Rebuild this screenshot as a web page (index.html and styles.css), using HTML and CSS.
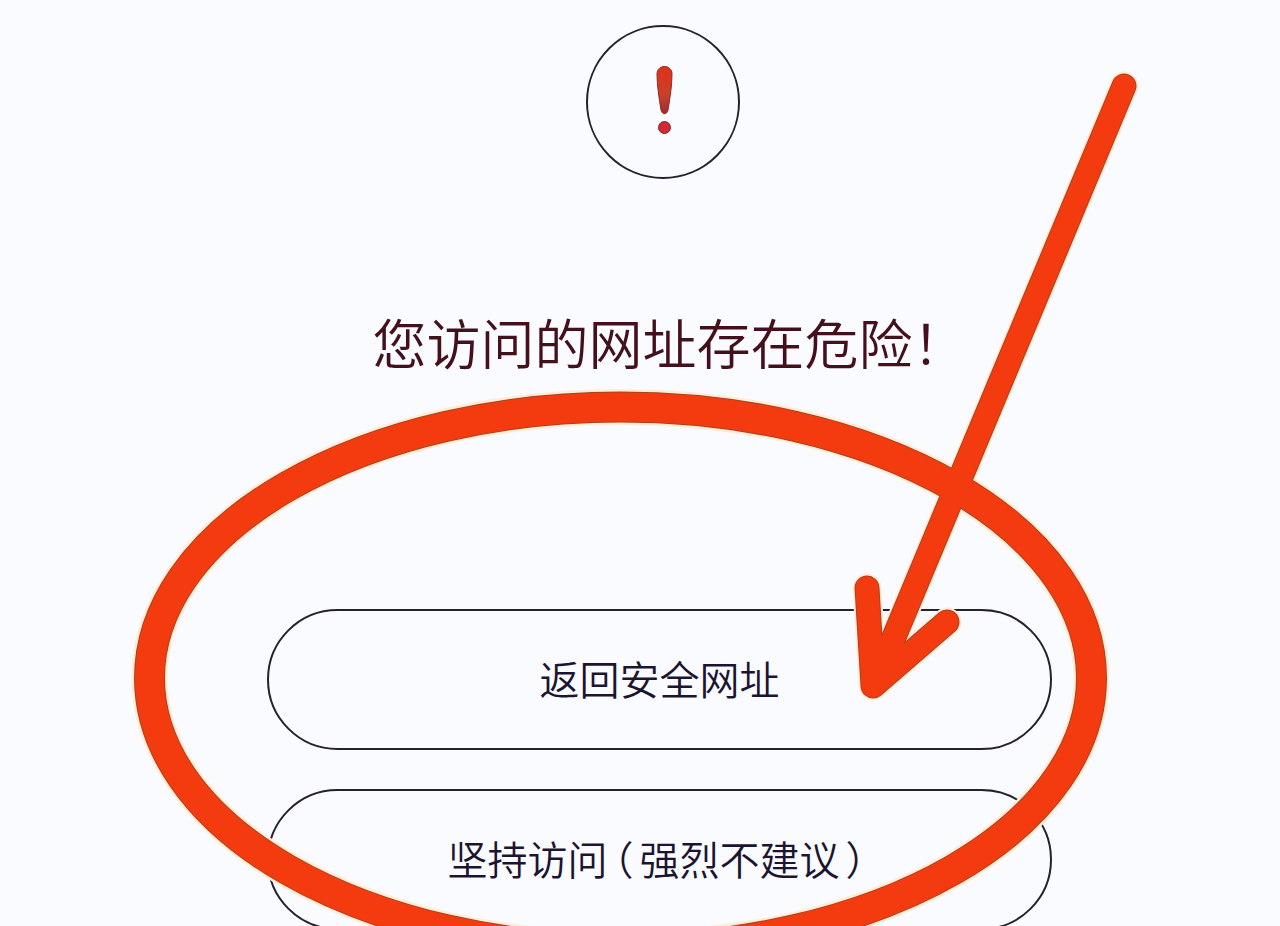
FILE: index.html
```html
<!DOCTYPE html>
<html lang="zh-CN">
<head>
<meta charset="utf-8">
<meta name="viewport" content="width=device-width, initial-scale=1">
<title>您访问的网址存在危险！</title>
<link rel="stylesheet" href="styles.css">
</head>
<body>
<div class="page">
  <main class="warning">
    <svg class="warning-icon" viewBox="0 0 156 156" aria-hidden="true">
      <defs>
        <linearGradient id="mark" x1="0" y1="0" x2="0" y2="1">
          <stop offset="0" stop-color="#e0301c"/>
          <stop offset="0.6" stop-color="#c9412a"/>
          <stop offset="1" stop-color="#9c2c38"/>
        </linearGradient>
      </defs>
      <circle cx="78" cy="78" r="76" fill="none" stroke="#25222f" stroke-width="2"/>
      <path d="M72 50C72 40 87 40 87 50C87 61 85 74 83 86C82 91 77 91 76 86C74 74 72 61 72 50Z" fill="url(#mark)" stroke="#8c2b20" stroke-width="1"/>
      <circle cx="79.500" cy="103.500" r="6" fill="#cf2a35" stroke="#8c2028" stroke-width="1"/>
    </svg>
    <h1 class="title">您访问的网址存在危险！</h1>
    <div class="actions">
      <button class="action" type="button">返回安全网址</button>
      <button class="action" type="button">坚持访问<span class="paren">（</span>强烈不建议<span class="paren">）</span></button>
    </div>
  </main>
  <svg class="annotation" viewBox="0 0 1280 926" preserveAspectRatio="xMidYMin meet" aria-hidden="true">
    <g class="halo">
      <ellipse cx="620.500" cy="678" rx="471" ry="271"/>
      <path class="shaft" d="M1124 86L874 685"/>
      <path class="shaft" d="M867 588L873 686L947 622"/>
    </g>
    <g class="edge">
      <ellipse cx="620.500" cy="678" rx="471" ry="271"/>
      <path class="shaft" d="M1124 86L874 685"/>
      <path class="shaft" d="M867 588L873 686L947 622"/>
    </g>
    <g class="ink">
      <ellipse cx="620.500" cy="678" rx="471" ry="271"/>
      <path class="shaft" d="M1124 86L874 685"/>
      <path class="shaft" d="M867 588L873 686L947 622"/>
    </g>
  </svg>
</div>
</body>
</html>
```
FILE: styles.css
```css
* {
  box-sizing: border-box;
}

body {
  margin: 0;
  background: #f9fbff;
  color: #1c1430;
  font-family: "Noto Sans CJK SC", sans-serif;
}

.page {
  position: relative;
  height: 100vh;
  overflow: hidden;
}

.warning {
  display: flex;
  flex-direction: column;
  align-items: center;
  padding: 24px 228px 0 267px;
}

.warning-icon {
  display: block;
  width: 156px;
  height: 156px;
  margin-left: 7px;
}

.title {
  margin: 127px 0 0 20px;
  color: #43101c;
  font-size: 54px;
  font-weight: 350;
  line-height: 70px;
  white-space: nowrap;
}

.actions {
  display: flex;
  flex-direction: column;
  gap: 39px;
  width: 100%;
  margin-top: 232px;
}

.action {
  width: 100%;
  height: 141px;
  padding: 0 0 4px;
  border: 2px solid #25222f;
  border-radius: 71px;
  background: transparent;
  color: inherit;
  font-family: inherit;
  font-size: 40px;
  font-weight: 350;
  line-height: 60px;
  white-space: nowrap;
}

.paren {
  padding: 0 6px;
  font-feature-settings: "halt";
}

.annotation {
  position: absolute;
  top: 0;
  left: 0;
  width: 100%;
  pointer-events: none;
}

.annotation g {
  fill: none;
  stroke-linecap: round;
  stroke-linejoin: round;
}

.halo {
  stroke: #ffecd9;
  stroke-width: 36px;
}

.halo .shaft {
  stroke-width: 29px;
}

.edge {
  stroke: #a8431c;
  stroke-width: 31px;
}

.edge .shaft {
  stroke-width: 25px;
}

.ink {
  stroke: #f43b10;
  stroke-width: 29px;
}

.ink .shaft {
  stroke-width: 23px;
}
```
